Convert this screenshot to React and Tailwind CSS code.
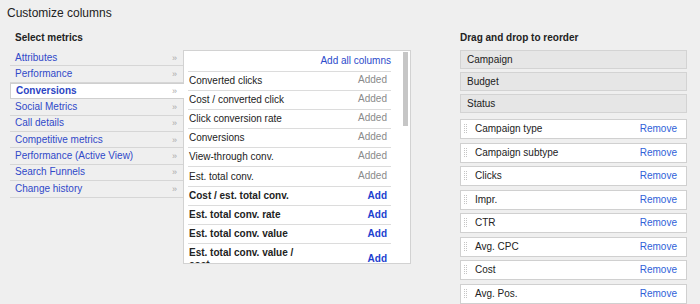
import React from 'react'

const categories = [
  'Attributes',
  'Performance',
  'Conversions',
  'Social Metrics',
  'Call details',
  'Competitive metrics',
  'Performance (Active View)',
  'Search Funnels',
  'Change history',
]

const metrics = [
  { name: 'Converted clicks', added: true },
  { name: 'Cost / converted click', added: true },
  { name: 'Click conversion rate', added: true },
  { name: 'Conversions', added: true },
  { name: 'View-through conv.', added: true },
  { name: 'Est. total conv.', added: true },
  { name: 'Cost / est. total conv.', added: false },
  { name: 'Est. total conv. rate', added: false },
  { name: 'Est. total conv. value', added: false },
  { name: 'Est. total conv. value / cost', added: false },
]

const fixedColumns = ['Campaign', 'Budget', 'Status']

const movableColumns = ['Campaign type', 'Campaign subtype', 'Clicks', 'Impr.', 'CTR', 'Avg. CPC', 'Cost', 'Avg. Pos.']

const Grip = () => (
  <svg width="4" height="10" viewBox="0 0 4 10" className="shrink-0">
    {[0, 2, 4, 6, 8].map((y) => (
      <g key={y} fill="#c4c4c4">
        <rect x="0" y={y} width="1" height="1" />
        <rect x="2" y={y} width="1" height="1" />
      </g>
    ))}
  </svg>
)

const CategoryList = () => (
  <div className="w-[173px] shrink-0">
    {categories.map((name) => {
      const selected = name === 'Conversions'
      return (
        <div
          key={name}
          className={
            selected
              ? 'relative z-10 -mr-[1px] flex h-[16.4px] items-center justify-between border border-r-0 border-[#cfcfcf] bg-white pl-[5px] pr-[7px]'
              : 'flex h-[16.4px] items-center justify-between border-b border-[#d6d6d6] pl-[5px] pr-[6px]'
          }
        >
          <span className={selected ? 'font-bold text-[#2b45c4]' : 'text-[#3049c9]'}>{name}</span>
          <span className="text-[9px] text-[#aaaaaa]">»</span>
        </div>
      )
    })}
  </div>
)

const MetricsPanel = () => (
  <div className="flex h-[214px] w-[228px] shrink-0 overflow-hidden border border-[#d2d2d2] bg-white pl-[4px] pr-[2px]">
    <div className="w-[203px] shrink-0">
      <div className="flex h-[21px] items-center justify-end border-b border-[#dcdcdc]">
        <span className="text-[#2b4acb]">Add all columns</span>
      </div>
      {metrics.map((m) => (
        <div key={m.name} className="flex min-h-[19.1px] items-center justify-between border-b border-[#dcdcdc] py-[3px] pl-[1px] pr-[4px]">
          <span className={m.added ? 'w-[118px] text-[#222222]' : 'w-[118px] font-bold text-[#222222]'}>{m.name}</span>
          {m.added ? (
            <span className="-mt-[2px] text-[#8a8a8a]">Added</span>
          ) : (
            <span className="font-bold text-[#1d3fcf]">Add</span>
          )}
        </div>
      ))}
    </div>
    <div className="ml-[12px] w-[5px] shrink-0 pt-[1px]">
      <div className="h-[74px] bg-[#c6c6c6]" />
    </div>
  </div>
)

const ReorderList = () => (
  <div className="w-[227px] shrink-0">
    <div className="h-[18px] font-bold text-[#222222]">Drag and drop to reorder</div>
    <div className="flex flex-col gap-[3px]">
      {fixedColumns.map((name) => (
        <div key={name} className="flex h-[19px] items-center border border-[#d3d3d3] bg-[#e6e6e6] pl-[6px] text-[#222222]">
          {name}
        </div>
      ))}
    </div>
    <div className="mt-[6px] flex flex-col gap-[3.5px]">
      {movableColumns.map((name) => (
        <div key={name} className="flex h-[20px] items-center border border-[#d0d0d0] bg-white pl-[3px] pr-[9px]">
          <Grip />
          <span className="ml-[7px] flex-1 text-[#222222]">{name}</span>
          <span className="text-[#2f62d8]">Remove</span>
        </div>
      ))}
    </div>
  </div>
)

export default function App() {
  return (
    <div className="h-[304px] w-[700px] overflow-hidden bg-[#efefef] text-[10px] leading-[12px] font-['Liberation_Sans',Arial,sans-serif]">
      <div className="pl-[7px] pt-[6px] text-[12px] leading-[14px] text-[#222222]">Customize columns</div>
      <div className="mt-[12px] flex">
        <div className="ml-[10px]">
          <div className="h-[18px] pl-[5px] font-bold text-[#222222]">Select metrics</div>
          <div className="flex items-start">
            <CategoryList />
            <MetricsPanel />
          </div>
        </div>
        <div className="ml-[49px]">
          <ReorderList />
        </div>
      </div>
    </div>
  )
}
